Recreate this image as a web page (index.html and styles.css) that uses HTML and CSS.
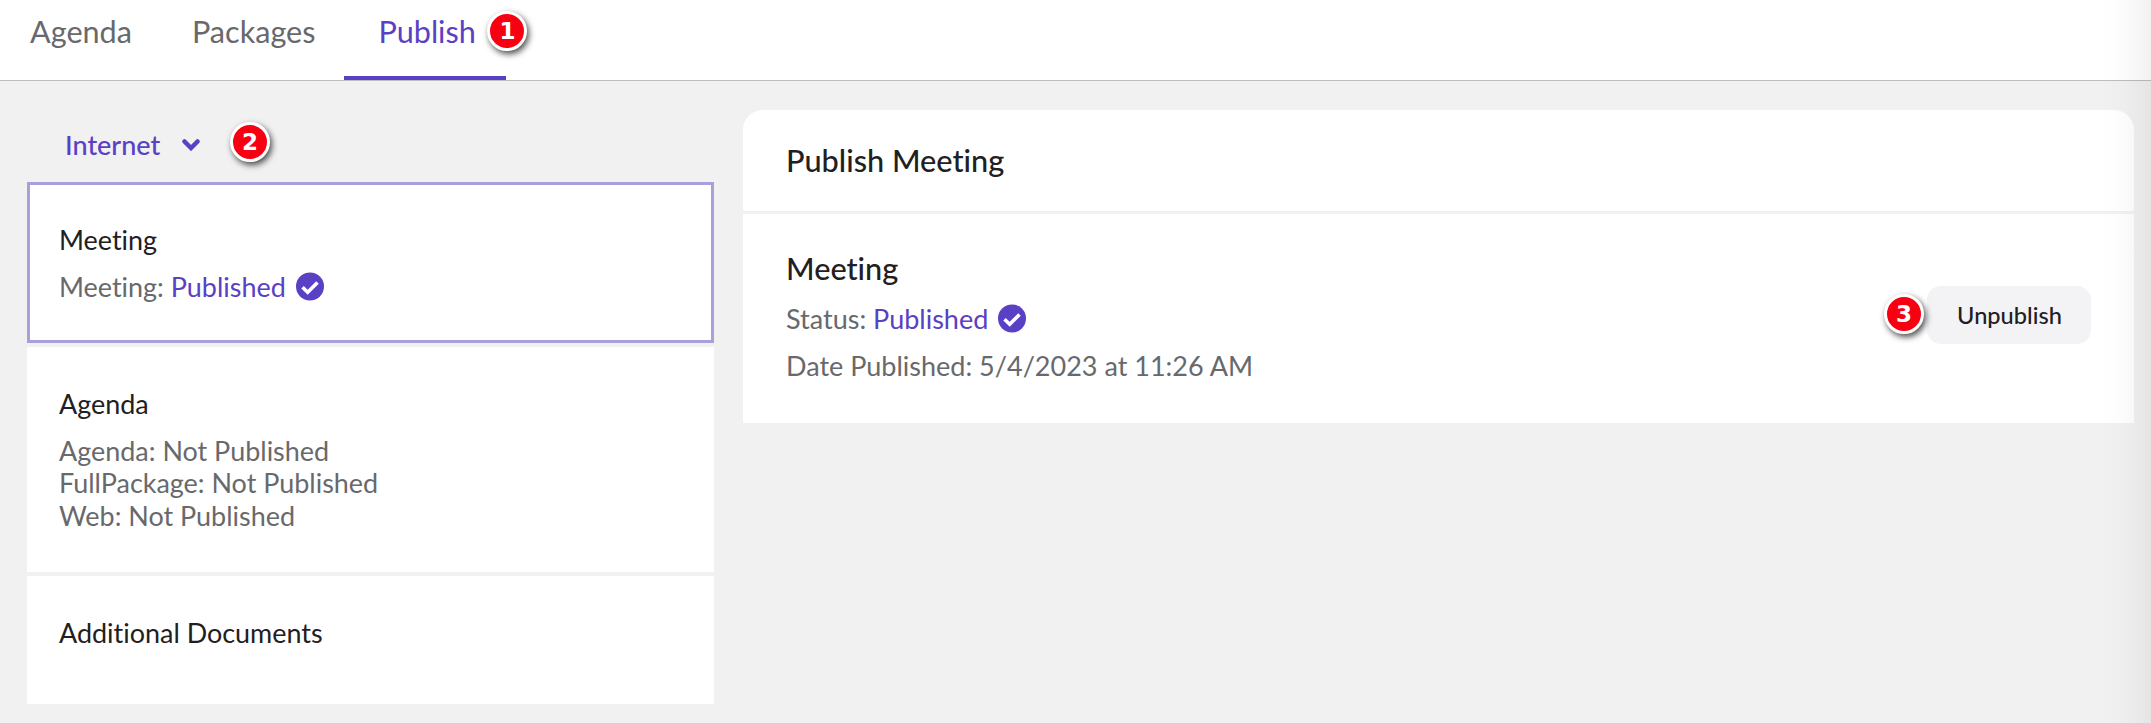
FILE: index.html
```html
<!DOCTYPE html>
<html lang="en">
<head>
  <meta charset="UTF-8">
  <meta name="viewport" content="width=device-width, initial-scale=1.0">
  <title>Publish Meeting</title>
  <link rel="stylesheet" href="styles.css">
</head>
<body>

  <nav class="tabs">
    <a class="tab">Agenda</a>
    <a class="tab">Packages</a>
    <a class="tab active">Publish<span class="marker marker-tab">1</span></a>
  </nav>

  <main class="content">
    <section class="sidebar">
      <div class="target">
        <span class="target-name">Internet</span>
        <svg class="chevron" viewBox="0 0 18 12"><path d="M2.5 2.5 L9 9 L15.5 2.5"/></svg>
        <span class="marker marker-target">2</span>
      </div>

      <div class="card selected">
        <h3>Meeting</h3>
        <p>Meeting: <span class="published">Published</span>
          <svg class="check" viewBox="0 0 28 28"><circle cx="14" cy="14" r="14"/><path d="M6.5 14.8 L11.7 19.8 L21.5 10"/></svg>
        </p>
      </div>

      <div class="card card-agenda">
        <h3>Agenda</h3>
        <p>Agenda: Not Published</p>
        <p>FullPackage: Not Published</p>
        <p>Web: Not Published</p>
      </div>

      <div class="card card-docs">
        <h3>Additional Documents</h3>
      </div>
    </section>

    <section class="panel">
      <header class="panel-header">
        <h2>Publish Meeting</h2>
      </header>
      <div class="panel-body">
        <div class="details">
          <h2>Meeting</h2>
          <p>Status: <span class="published">Published</span>
            <svg class="check" viewBox="0 0 28 28"><circle cx="14" cy="14" r="14"/><path d="M6.5 14.8 L11.7 19.8 L21.5 10"/></svg>
          </p>
          <p>Date Published: 5/4/2023 at 11:26 AM</p>
        </div>
        <button class="unpublish">Unpublish<span class="marker marker-button">3</span></button>
      </div>
    </section>
  </main>

  <div class="edge-shadow"></div>

</body>
</html>
```
FILE: styles.css
```css
* {
  box-sizing: border-box;
}
body {
  margin: 0;
  height: 723px;
  overflow: hidden;
  background-color: #f1f1f1;
  font-family: Lato, sans-serif;
  font-size: 27px;
  font-variant-ligatures: none;
  color: #1f2022;
}
h2, h3, p {
  margin: 0;
}

/* Tabs */
.tabs {
  display: flex;
  height: 81px;
  background-color: #fff;
  border-bottom: 1px solid #bdbdbd;
}
.tab {
  position: relative;
  height: 80px;
  padding: 12px 30px 0;
  font-size: 30.6px;
  line-height: 40px;
  color: #68696c;
}
.tab.active {
  width: 162px;
  padding-left: 34px;
  margin-left: -1px;
  color: #5a40c4;
  border-bottom: 4px solid #5a40c4;
}

/* Numbered markers */
.marker {
  position: absolute;
  width: 40px;
  height: 40px;
  border: 3px solid #fff;
  border-radius: 50%;
  background-color: #f80012;
  box-shadow: 2px 3px 6px rgba(0, 0, 0, 0.7);
  font-family: "DejaVu Sans", sans-serif;
  font-size: 23px;
  font-weight: bold;
  line-height: 34px;
  text-align: center;
  color: #fff;
}
.marker-tab {
  left: 143px;
  top: 11px;
}
.marker-target {
  left: 203px;
  top: 41px;
}
.marker-button {
  left: -43px;
  top: 8px;
}

/* Layout */
.content {
  display: flex;
  gap: 29px;
  padding-left: 27px;
}
.sidebar {
  display: flex;
  flex-direction: column;
  gap: 4px;
  width: 687px;
}
.target {
  position: relative;
  display: flex;
  align-items: center;
  gap: 22px;
  height: 97px;
  padding: 30px 0 0 38px;
  font-weight: 500;
  color: #5a40c4;
}
.chevron {
  width: 18px;
  height: 12px;
}
.chevron path {
  fill: none;
  stroke: #5a40c4;
  stroke-width: 4.5;
  stroke-linecap: round;
}

/* Left cards */
.card {
  padding: 41px 32px 0;
  background-color: #fff;
  font-size: 26.95px;
  line-height: 32.6px;
}
.card h3 {
  margin-bottom: 14px;
  font-size: 26.95px;
  font-weight: 400;
}
.card p, .details p {
  color: #68696c;
}
.card.selected {
  height: 161px;
  border: 3px solid #aa9fdb;
  padding: 39px 29px 0;
}
.card-agenda {
  height: 225px;
}
.card-docs {
  height: 128px;
}
.card .published, .details .published {
  color: #5a40c4;
}
.check {
  width: 28px;
  height: 29px;
  margin-left: 3px;
  vertical-align: -4px;
}
.check circle {
  fill: #5a40c4;
}
.check path {
  fill: none;
  stroke: #fff;
  stroke-width: 3.6;
}

/* Right panel */
.panel {
  display: flex;
  flex-direction: column;
  gap: 3px;
  width: 1391px;
  padding-top: 29px;
}
.panel h2 {
  font-size: 30.7px;
  font-weight: 500;
  line-height: 40px;
}
.panel-header {
  height: 101px;
  padding: 31px 43px 0;
  border-radius: 20px 20px 0 0;
  background-color: #fff;
}
.panel-body {
  display: flex;
  justify-content: space-between;
  height: 209px;
  padding: 35px 43px 0;
  background-color: #fff;
}
.details p {
  margin-top: 14px;
  line-height: 33px;
}
.details h2 {
  margin-bottom: -1px;
}
.unpublish {
  position: relative;
  width: 164px;
  height: 58px;
  margin-top: 37px;
  padding: 0 0 0 1px;
  border: none;
  border-radius: 14px;
  background-color: #f3f3f6;
  font-family: Lato, sans-serif;
  font-size: 23.6px;
  font-weight: 500;
  color: #1f2022;
}

/* Soft shade along the right side of the window */
.edge-shadow {
  position: absolute;
  top: 0;
  right: 0;
  width: 50px;
  height: 723px;
  background: linear-gradient(to right, rgba(0, 0, 0, 0), rgba(0, 0, 0, 0.015) 50%, rgba(0, 0, 0, 0.05));
}
```
